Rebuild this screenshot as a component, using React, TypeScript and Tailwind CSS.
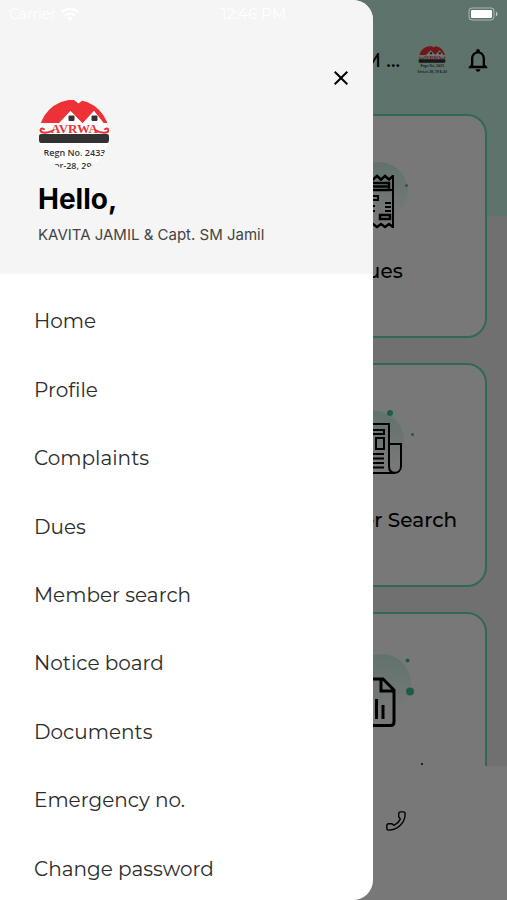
import React from 'react';
import { MdClose, MdNotificationsNone, MdWifi } from 'react-icons/md';
import { Phone } from 'lucide-react';

const menuItems = [
  'Home',
  'Profile',
  'Complaints',
  'Dues',
  'Member search',
  'Notice board',
  'Documents',
  'Emergency no.',
  'Change password',
];

type LogoProps = {
  className: string;
  round?: boolean;
};

const Logo = ({ className, round }: LogoProps) => (
  <svg className={className} viewBox={round ? '6 0 72 73' : '0 0 84 76'} role="img" aria-label="AVRWA">
    <clipPath id="logoRound">
      <circle cx="42" cy="37" r="35.5" />
    </clipPath>
    <g clipPath={round ? 'url(#logoRound)' : undefined}>
      {round && <rect x="6" y="0" width="72" height="73" fill="#fff" />}
      <path
        d="M9 25C12 14 20 3 36 2L42 2L46.500 5.500L51 2C62 3 72 11 76 25H71.500L62 13L50.500 25.500L38.500 13L27 25Z"
        fill="#ee3136"
      />
      <path d="M26 27L38.500 13L50.500 25.500L62 13L73 27Z" fill="#fff" />
      <rect x="36.500" y="17.500" width="6" height="5.500" rx="1" fill="#333" />
      <rect x="59.500" y="17.500" width="6" height="5.500" rx="1" fill="#333" />
      <text
        x="42.5"
        y="34.5"
        textAnchor="middle"
        fill="#ee3136"
        className="font-['Liberation_Serif',serif] text-[13px] font-bold"
      >
        AVRWA
      </text>
      <path
        d="M22 32C16 35.500 9 35.500 8.500 32.500C8.500 30 12 30 12 32M63 32C69 35.500 76 35.500 76.500 32.500C76.500 30 73 30 73 32"
        fill="none"
        stroke="#ee3136"
        strokeWidth="2"
      />
      <rect x="7" y="36" width="70" height="9" rx="2" fill="#333" />
      <text x="42.5" y="57.5" textAnchor="middle" fill="#333" className="font-['Open_Sans',sans-serif] text-[9px] font-semibold">
        Regn No. 2433
      </text>
      <text x="42.5" y="71" textAnchor="middle" fill="#333" className="font-['Open_Sans',sans-serif] text-[9px] font-semibold">
        Sector-28, 29 &amp; 43
      </text>
    </g>
  </svg>
);

const Glow = ({ id, cx, cy }: { id: string; cx: number; cy: number }) => (
  <>
    <linearGradient id={id} x1="0" y1="0" x2="0" y2="1">
      <stop offset="0" stopColor="#64dcbb" stopOpacity="0.32" />
      <stop offset="1" stopColor="#64dcbb" stopOpacity="0" />
    </linearGradient>
    <circle cx={cx} cy={cy} r="29" fill={`url(#${id})`} stroke="none" />
  </>
);

const DuesIcon = () => (
  <svg className="h-[90px] w-[100px]" viewBox="0 0 100 90" fill="none" stroke="#000" strokeWidth="2" aria-hidden="true">
    <Glow id="glowDues" cx={52} cy={38} />
    <circle cx="79.5" cy="32.5" r="1.5" fill="#3cc49b" stroke="none" />
    <path d="M34 22V75M66 22V75" />
    <path d="M34 23L38 26.500L42 23L46 26.500L50 23L54 26.500L58 23L62 26.500L66 23M34 74L38 71L42 74L46 71L50 74L54 71L58 74L62 71L66 74" strokeWidth="2.5" />
    <path d="M38 30H62V37H38ZM42 33.500H62" strokeWidth="2.500" />
    <path d="M62 37H66M44 43H51V47H44ZM58 50H64M58 54H64M58 58H64M38 53H48M38 58H48" />
    <rect x="53" y="62" width="10" height="4" strokeWidth="2.500" />
  </svg>
);

const MemberIcon = () => (
  <svg className="h-[90px] w-[100px]" viewBox="0 0 100 90" fill="none" stroke="#000" strokeWidth="2" aria-hidden="true">
    <Glow id="glowMember" cx={48} cy={38} />
    <circle cx="63" cy="11" r="3" fill="#3cc49b" stroke="none" />
    <circle cx="85.5" cy="32.5" r="1.5" fill="#3cc49b" stroke="none" />
    <path d="M68 71H28V22H62V64C62 73 74 73 74 64V42H62M62 64C62 69 64 71 68 71" />
    <rect x="33" y="28" width="24" height="4" />
    <rect x="49" y="36" width="8" height="11" />
    <path d="M33 37H45M33 42H45M33 47H45M33 52H57M33 56.500H57M33 61H57M33 65.500H57" />
  </svg>
);

const ReportIcon = () => (
  <svg className="h-[90px] w-[100px]" viewBox="0 0 100 90" fill="none" stroke="#000" strokeWidth="3" aria-hidden="true">
    <Glow id="glowReport" cx={55} cy={32} />
    <circle cx="80.5" cy="9.5" r="2" fill="#3cc49b" stroke="none" />
    <circle cx="83" cy="40.5" r="4" fill="#3cc49b" stroke="none" />
    <path d="M36 28H56L67 39V71Q67 74.500 63.500 74.500H36Q32 74.500 32 71V32Q32 28 36 28Z" />
    <path d="M54 28V40H67M42 54V68M49.500 48V68M56 54V68" />
  </svg>
);

const Card = ({ label, children }: { label: React.ReactNode; children: React.ReactNode }) => (
  <a
    href="#"
    className="col-start-2 flex h-56 flex-col items-center rounded-[20px] border-2 border-[#64e0bc] bg-white pt-[37px] text-xl font-medium text-black"
  >
    {children}
    <span className="mt-[14px] whitespace-nowrap leading-7">{label}</span>
  </a>
);

const StatusBar = () => (
  <div className="pointer-events-none absolute inset-x-0 top-0 z-30 grid grid-cols-3 items-center px-[9px] pt-1 text-sm leading-5 text-white">
    <div className="flex items-center gap-1">
      <span>Carrier</span>
      <MdWifi className="h-5 w-5" />
    </div>
    <span className="text-center text-[15px]">12:46 PM</span>
    <svg className="h-[14px] w-[30px] justify-self-end" viewBox="0 0 30 14" fill="none" aria-hidden="true">
      <rect x="1" y="1" width="25" height="12" rx="3" stroke="#fff" strokeOpacity="0.5" />
      <rect x="3" y="3" width="21" height="8" rx="1" fill="#fff" />
      <path d="M28 4.500C30 5.500 30 8.500 28 9.500Z" fill="#fff" fillOpacity="0.6" />
    </svg>
  </div>
);

const Dashboard = () => (
  <div className="flex h-full flex-col bg-[#eee]">
    <div className="min-h-0 flex-1 overflow-hidden">
      <header className="h-[216px] bg-[#c6f5e4] pr-[15px] pt-10">
        <div className="flex h-10 items-center justify-end gap-4">
          <span className="whitespace-nowrap text-xl font-medium">Capt. SM ...</span>
          <Logo className="h-[30px] w-8" />
          <button type="button" aria-label="Notifications">
            <MdNotificationsNone className="h-7 w-7" />
          </button>
        </div>
      </header>
      <main className="-mt-[102px] grid grid-cols-2 gap-[25px] px-5">
        <Card label="Dues">
          <DuesIcon />
        </Card>
        <Card label="Member Search">
          <MemberIcon />
        </Card>
        <Card label={<span className="ml-[90px] mt-2 block h-[2px] w-[2px] rounded-full bg-black" />}>
          <ReportIcon />
        </Card>
      </main>
    </div>
    <footer className="flex h-[134px] justify-end bg-white pr-[100px] pt-11">
      <a href="#" aria-label="Call" className="h-[22px]">
        <Phone className="h-[22px] w-[22px] -scale-x-100" strokeWidth={1.5} />
      </a>
    </footer>
  </div>
);

const Drawer = () => (
  <aside className="absolute inset-y-0 left-0 z-20 flex w-[73.5%] flex-col overflow-hidden rounded-r-[20px] bg-white">
    <div className="flex h-[274px] shrink-0 flex-col bg-[#f5f5f5] pl-[38px] pr-5 pt-[66px] font-['Inter',sans-serif]">
      <button type="button" aria-label="Close menu" className="self-end text-black">
        <MdClose className="h-6 w-6" />
      </button>
      <Logo round className="mt-2 h-[73px] w-[72px]" />
      <h1 className="mt-2 text-[28px] font-bold leading-10 text-black">Hello,</h1>
      <p className="mt-1 whitespace-nowrap text-[15px] leading-6 text-[#444]">KAVITA JAMIL &amp; Capt. SM Jamil</p>
    </div>
    <nav className="-mb-[3px] grid flex-1 auto-rows-fr pt-[13px]">
      {menuItems.map((item) => (
        <a key={item} href="#" className="flex items-center pl-[34px] text-xl leading-7 text-[#2b2b2b]">
          {item}
        </a>
      ))}
    </nav>
  </aside>
);

const App = () => (
  <div className="relative h-screen overflow-hidden font-['Montserrat','Inter',sans-serif]">
    <Dashboard />
    <div className="absolute inset-0 z-10 bg-black/53" />
    <Drawer />
    <StatusBar />
  </div>
);

export default App;
